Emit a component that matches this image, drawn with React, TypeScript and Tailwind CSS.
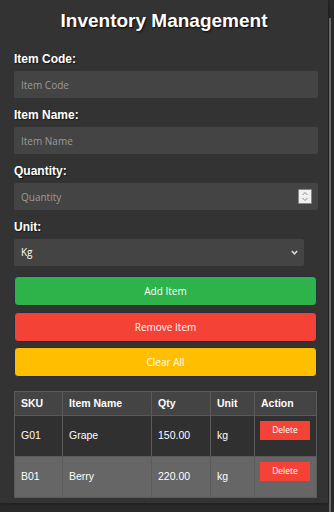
import { useState } from 'react';

type Item = { sku: string; name: string; qty: number; unit: string };

const labelCls =
  'block text-[12px] leading-[14px] font-bold text-white mb-[5px] [text-shadow:1px_1px_1px_rgba(0,0,0,0.6)]';
const inputCls =
  'block w-full h-[27px] rounded-[2px] bg-[#444] px-[7px] text-[10px] text-white placeholder:text-[#9a9a9a] outline-none font-["Open_Sans",sans-serif]';

export default function App() {
  const [items, setItems] = useState<Item[]>([
    { sku: 'G01', name: 'Grape', qty: 150, unit: 'kg' },
    { sku: 'B01', name: 'Berry', qty: 220, unit: 'kg' },
  ]);

  return (
    <div className="relative w-[334px] h-[512px] overflow-hidden bg-[#2a2a2a] font-['Liberation_Sans',Arial,sans-serif]">
      <div className="w-[328px] h-[503px] bg-[#333] pl-[14px] pr-[10px] pt-[9px] shadow-[0_0_4px_rgba(0,0,0,0.5)]">
        <h1 className="text-center text-[19px] leading-[24px] font-bold text-white mb-[19px] pr-[4px] [text-shadow:1px_1px_2px_rgba(0,0,0,0.8)]">
          Inventory Management
        </h1>

        <label className={labelCls}>Item Code:</label>
        <input className={inputCls} placeholder="Item Code" />

        <label className={`${labelCls} mt-[10px]`}>Item Name:</label>
        <input className={inputCls} placeholder="Item Name" />

        <label className={`${labelCls} mt-[10px]`}>Quantity:</label>
        <div className="relative">
          <input className={inputCls} placeholder="Quantity" />
          {/* spinner */}
          <div className="absolute right-[6px] top-[6px] w-[14px] h-[15px] bg-[#f0f0f0] border border-[#888] rounded-[1px] flex flex-col items-center justify-center">
            <svg width="8" height="11" viewBox="0 0 8 11" fill="none" stroke="#8a8a8a" strokeWidth="1">
              <path d="M1.5 4 L4 1.5 L6.5 4" />
              <path d="M1.5 7 L4 9.5 L6.5 7" />
            </svg>
          </div>
        </div>

        <label className={`${labelCls} mt-[10px]`}>Unit:</label>
        <div className="relative w-[290px]">
          <select className="block w-full h-[27px] appearance-none rounded-[2px] bg-[#444] px-[7px] text-[10px] text-white outline-none font-['Open_Sans',sans-serif]">
            <option>Kg</option>
            <option>g</option>
            <option>L</option>
          </select>
          <svg
            className="absolute right-[6px] top-[11px]"
            width="7"
            height="5"
            viewBox="0 0 7 5"
            fill="none"
            stroke="#ddd"
            strokeWidth="1.5"
          >
            <path d="M0.8 1 L3.5 3.8 L6.2 1" />
          </svg>
        </div>

        <div className="flex flex-col w-[303px] mt-[10px] font-['Open_Sans',sans-serif] text-[10px] text-white">
          <button className="h-[30px] rounded-[4px] bg-[#2db34a] border border-[#26303a]">Add Item</button>
          <button
            onClick={() => setItems(items.slice(0, -1))}
            className="h-[30px] mt-[6px] rounded-[4px] bg-[#f44336] border border-[#26303a]"
          >
            Remove Item
          </button>
          <button
            onClick={() => setItems([])}
            className="h-[30px] mt-[5px] rounded-[4px] bg-[#ffbf00] border border-[#26303a]"
          >
            Clear All
          </button>
        </div>

        <table className="mt-[14px] w-[302px] border-collapse border border-[#5a5a5a] text-[10.5px] text-white table-fixed">
          <colgroup>
            <col className="w-[48px]" />
            <col className="w-[89px]" />
            <col className="w-[59px]" />
            <col className="w-[44px]" />
            <col className="w-[62px]" />
          </colgroup>
          <thead>
            <tr className="h-[24px] bg-[#444]">
              {['SKU', 'Item Name', 'Qty', 'Unit', 'Action'].map((h) => (
                <th key={h} className="border border-[#5a5a5a] px-[6px] text-left font-bold">
                  {h}
                </th>
              ))}
            </tr>
          </thead>
          <tbody>
            {items.map((it, i) => (
              <tr key={it.sku} className={`h-[41px] ${i % 2 === 0 ? 'bg-[#303030]' : 'bg-[#666]'}`}>
                <td className="border border-[#5a5a5a] px-[6px]">{it.sku}</td>
                <td className="border border-[#5a5a5a] px-[6px]">{it.name}</td>
                <td className="border border-[#5a5a5a] px-[6px]">{it.qty.toFixed(2)}</td>
                <td className="border border-[#5a5a5a] px-[6px]">{it.unit}</td>
                <td className="border border-[#5a5a5a] px-[5px] pt-[5px] align-top">
                  <button
                    onClick={() => setItems(items.filter((x) => x.sku !== it.sku))}
                    className="w-[50px] h-[19px] bg-[#f44336] text-white text-[8.5px] font-['Open_Sans',sans-serif]"
                  >
                    Delete
                  </button>
                </td>
              </tr>
            ))}
          </tbody>
        </table>
      </div>
      {/* page scrollbar thumb */}
      <div className="absolute left-[329px] top-[18px] bottom-0 w-[2px] bg-[#6a6a6a]" />
    </div>
  );
}
